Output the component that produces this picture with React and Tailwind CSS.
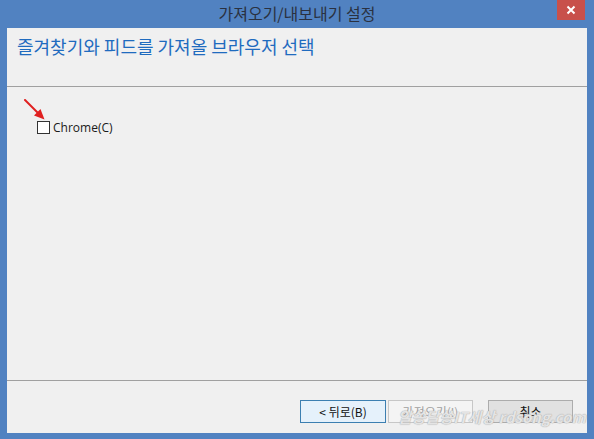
export default function App() {
  const kr = { fontFamily: '"Noto Sans CJK KR", "Noto Sans", sans-serif' };
  return (
    <div className="relative w-[594px] h-[439px] bg-[#5182c1] flex flex-col overflow-hidden" style={kr}>
      <div className="relative h-[28px] shrink-0 flex items-center justify-center">
        <span className="text-[16px] leading-none text-[#2a3140] -mt-[3px]">가져오기/내보내기 설정</span>
        <div className="absolute right-[9px] top-0 w-[28px] h-[20px] bg-[#c8504b] flex items-center justify-center">
          <svg width="10" height="10" viewBox="0 0 10 10">
            <path d="M1.5 1.5 L8.5 8.5 M8.5 1.5 L1.5 8.5" stroke="#fff" strokeWidth="2" />
          </svg>
        </div>
      </div>
      <div className="flex-1 mx-[7px] mb-[6px] bg-[#f0f0f0] flex flex-col">
        <div className="h-[58px] shrink-0 pl-[10px] pt-[6px]">
          <span className="text-[18px] leading-[24px] text-[#1f6bbf]">즐겨찾기와 피드를 가져올 브라우저 선택</span>
        </div>
        <div className="h-px bg-[#a0a0a0] shrink-0" />
        <div className="relative flex-1 pl-[30px] pt-[34px]">
          <svg className="absolute left-[17px] top-[12px]" width="24" height="24" viewBox="0 0 24 24">
            <path d="M1 1 L15 15" stroke="#e02020" strokeWidth="2" strokeLinecap="round" />
            <path d="M20.5 20.5 L10 16.5 L16.5 10 Z" fill="#e02020" />
          </svg>
          <label className="flex items-center gap-[3px]">
            <span className="w-[13px] h-[13px] border border-[#333] bg-white block" />
            <span className="text-[12px] leading-none text-[#1a1a1a]" style={{ fontFamily: '"Open Sans", "Noto Sans", sans-serif' }}>Chrome(C)</span>
          </label>
        </div>
        <div className="h-px bg-[#a0a0a0] shrink-0" />
        <div className="h-[52px] shrink-0 flex items-start justify-end pr-[14px] pt-[19px]">
          <button className="w-[86px] h-[23px] border border-[#3c7fb1] bg-[#e5f1fb] text-[12px] text-[#111] flex items-center justify-center">
            &lt; 뒤로(B)
          </button>
          <button className="ml-[2px] w-[85px] h-[23px] border border-[#c7c7c7] bg-[#f4f4f4] text-[12px] text-[#a0a0a0] flex items-center justify-center">
            가져오기(I)
          </button>
          <button className="ml-[15px] w-[85px] h-[23px] border border-[#acacac] bg-[#e1e1e1] text-[12px] text-[#111] flex items-center justify-center">
            취소
          </button>
        </div>
      </div>
      <div
        className="absolute left-[398px] top-[409px] whitespace-nowrap text-[15px] font-bold italic text-white/70 leading-none"
        style={{ textShadow: '0 0 1px #aaa, 0 0 1px #aaa' }}
      >
        알쏭달쏭IT세상 rdsong.com
      </div>
    </div>
  );
}
